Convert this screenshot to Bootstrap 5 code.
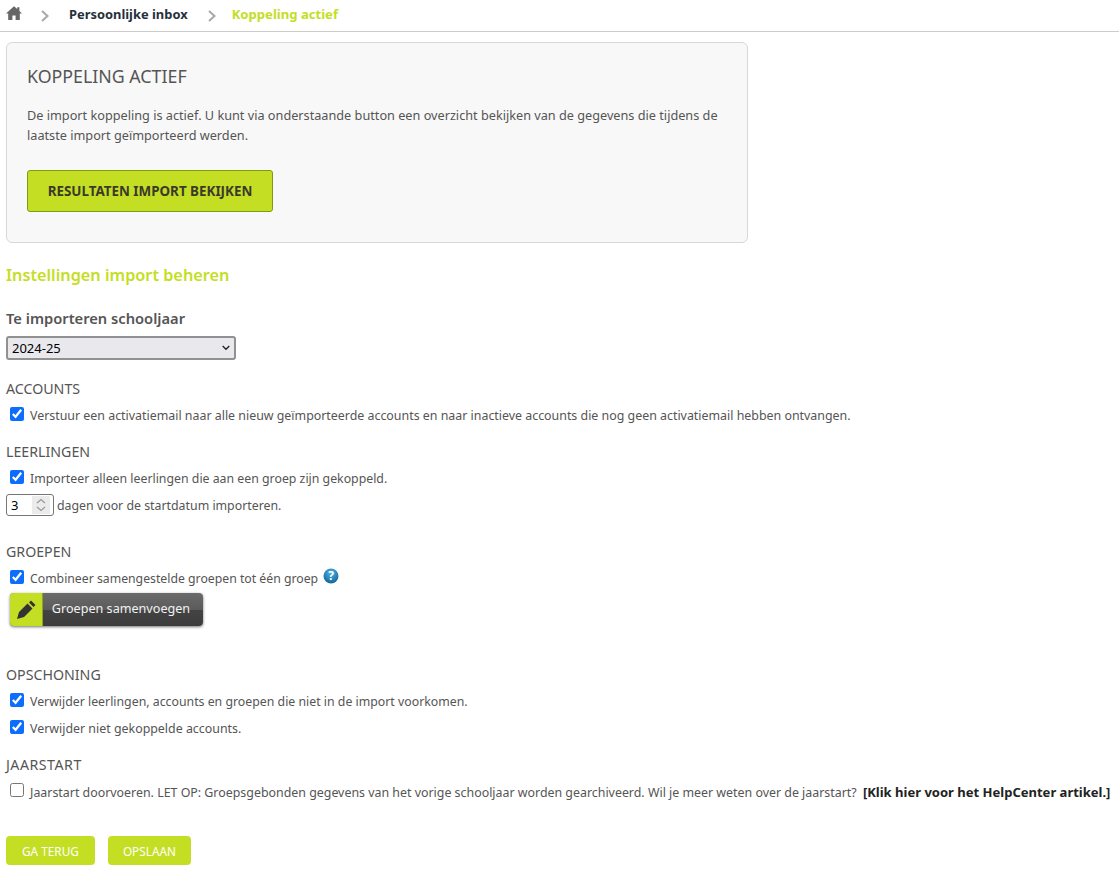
<!DOCTYPE html>
<html lang="nl">
<head>
<meta charset="utf-8">
<title>Koppeling actief</title>
<link rel="stylesheet" href="https://cdn.jsdelivr.net/npm/bootstrap@5.3.0/dist/css/bootstrap.min.css">
<style>
html,body{height:100%}
body{font-family:"Noto Sans","Open Sans",sans-serif;font-size:12.4px;color:#555;background:#fff;line-height:20px;overflow:hidden}
.crumbs{height:32px;border-bottom:1px solid #ccc;padding:0 0 4px 6px;font-weight:700;font-size:12.9px}
.crumbs a{color:#26303a;text-decoration:none}
.crumb-here{color:#c4de24;font-size:13.1px}
.crumb-home{width:16px;height:14px;margin-top:-2px}
.crumb-sep{width:8px;height:12px;margin:4px 20px 0 19px}
.crumb-sep.second{margin:4px 16px 0 20px}
.panel-box{width:742px;height:201px;margin:10px 0 0 6px;background:#f8f8f8;border:1px solid #d8d8d8;border-radius:6px;padding:20px 20px}
.panel-title{font-size:17.8px;line-height:26px;font-weight:400;color:#555;margin:0 0 16px}
.panel-text{margin:0 0 25px;font-size:12.7px}
.btn-result{width:246px;height:42px;background:#c4de24;border:1px solid #7d9c14;border-radius:3px;color:#3a3a2a;font-weight:700;font-size:13.4px;padding:0}
.btn-result:hover{background:#c4de24;color:#3a3a2a}
.form-wrap{padding-left:6px}
.sec-title{font-size:16.25px;line-height:22px;font-weight:600;color:#c4de24;margin:21px 0 0}
.year-label{font-size:14.7px;line-height:20px;font-weight:600;color:#555;margin:22px 0 8px}
.year-select{appearance:none;width:230px;height:24px;font-size:13px;color:#000;background:#e9e9ed url("data:image/svg+xml,%3Csvg xmlns='http://www.w3.org/2000/svg' width='8' height='6'%3E%3Cpath d='M.7 1l3.300 3.300L7.300 1' fill='none' stroke='%23222' stroke-width='1.300'/%3E%3C/svg%3E") no-repeat right 4px center;border:2px solid #919191;border-radius:3px;padding:0 0 0 4px;display:block;font-family:inherit}
.grp{font-size:14.2px;line-height:20px;color:#555;margin:17px 0 6px}
.grp.first{margin-top:19px}
.grp.after-num{margin-top:26px}
.grp.after-merge{margin-top:39px}
.grp.spaced{letter-spacing:.5px}
.line{height:20px;gap:6px;margin:0;padding-top:2px}
.line-next{margin-top:7px}
.line-tight{font-size:12.32px}
.line-tighter{font-size:12.25px}
.chk{margin:-4px 0 0 4px;width:14px;height:14px;flex:none;accent-color:#0d6efd}
.num-row{margin-top:6px;gap:3px;font-size:12.35px}
.num-txt{padding-top:2px}
.num{width:48px;height:22px;font-size:13px;border:1px solid #767676;border-radius:3px;padding:0 3px 0 4px;color:#000;font-family:inherit}
.num::-webkit-inner-spin-button{-webkit-appearance:none;opacity:1;width:18px;height:18px;background:#ebebeb url("data:image/svg+xml,%3Csvg xmlns='http://www.w3.org/2000/svg' width='18' height='18'%3E%3Cpath d='M5 7l4-3.500L13 7M5 11l4 3.500L13 11' fill='none' stroke='%23999' stroke-width='1.200'/%3E%3C/svg%3E") no-repeat center}
.hint{margin:-2px 0 0 -1px;align-self:flex-start;flex:none}
.merge{margin:5px 0 0 4px;width:193px;height:33px;border:0;padding:0;border-radius:4px;overflow:hidden;box-shadow:0 1px 3px rgba(0,0,0,.55);background:linear-gradient(#6b6b6b,#5b5b5b 50%,#444 51%,#3c3c3c);color:#f2f2f2;font-size:12.6px}
.merge-ico{width:33px;height:33px;background:#c4de24;border-right:1px solid #8fa31b}
.merge-txt{flex:1;text-align:center;padding:0 4px 2px 0}
.foot{margin-top:35px;gap:13px}
.foot-btn{height:29px;border:0;border-radius:4px;background:#c4de24;color:#fff;font-size:11.8px;font-weight:400;padding:0 16px}
.foot-btn.narrow{padding:0 15px}
.help-a{color:#222;font-weight:700;text-decoration:none;font-size:13.03px;margin-left:3px}
</style>
</head>
<body>
<nav class="crumbs d-flex align-items-center">
  <svg class="crumb-home" viewBox="0 0 16 14" aria-label="Home"><path fill="#666" d="M8 .2 0 7.4h2.2V14h4.2V9.4h3.2V14h4.2V7.4H16L13.4 5V1.2h-2.2v1.900z"/></svg>
  <svg class="crumb-sep" viewBox="0 0 8 12"><path d="M1 1l5.500 5L1 11" fill="none" stroke="#a8a8a8" stroke-width="2"/></svg>
  <a href="#">Persoonlijke inbox</a>
  <svg class="crumb-sep second" viewBox="0 0 8 12"><path d="M1 1l5.500 5L1 11" fill="none" stroke="#a8a8a8" stroke-width="2"/></svg>
  <span class="crumb-here">Koppeling actief</span>
</nav>
<section class="panel-box">
  <h2 class="panel-title">KOPPELING ACTIEF</h2>
  <p class="panel-text">De import koppeling is actief. U kunt via onderstaande button een overzicht bekijken van de gegevens die tijdens de laatste import geïmporteerd werden.</p>
  <button class="btn btn-result" type="button">RESULTATEN IMPORT BEKIJKEN</button>
</section>
<form class="form-wrap">
  <h3 class="sec-title">Instellingen import beheren</h3>
  <div class="year-label">Te importeren schooljaar</div>
  <select class="year-select"><option>2024-25</option></select>

  <div class="grp first">ACCOUNTS</div>
  <label class="line d-flex align-items-center"><input class="chk" type="checkbox" checked>Verstuur een activatiemail naar alle nieuw geïmporteerde accounts en naar inactieve accounts die nog geen activatiemail hebben ontvangen.</label>

  <div class="grp">LEERLINGEN</div>
  <label class="line line-tight d-flex align-items-center"><input class="chk" type="checkbox" checked>Importeer alleen leerlingen die aan een groep zijn gekoppeld.</label>
  <div class="num-row d-flex align-items-center"><input class="num" type="number" value="3"><span class="num-txt">dagen voor de startdatum importeren.</span></div>

  <div class="grp after-num">GROEPEN</div>
  <div class="line line-tighter d-flex align-items-center"><input class="chk" type="checkbox" checked>Combineer samengestelde groepen tot één groep
    <svg class="hint" width="16" height="16" viewBox="0 0 16 16"><defs><radialGradient id="hg" cx="50%" cy="30%" r="75%"><stop offset="0" stop-color="#4fb4e6"/><stop offset="1" stop-color="#0f5f95"/></radialGradient></defs><circle cx="8" cy="8" r="7.500" fill="url(#hg)"/><text x="8" y="12.400" text-anchor="middle" font-size="12" font-weight="700" fill="#fff">?</text></svg></div>
  <button type="button" class="merge d-flex align-items-center"><span class="merge-ico d-flex align-items-center justify-content-center"><svg width="20" height="20" viewBox="0 0 20 20"><path fill="#333" d="M1 19l2-7 8.500-8.500 5 5L8 17zM13 2.500 15 .5l4.500 4.500-2 2z"/></svg></span><span class="merge-txt">Groepen samenvoegen</span></button>

  <div class="grp after-merge">OPSCHONING</div>
  <label class="line line-tight d-flex align-items-center"><input class="chk" type="checkbox" checked>Verwijder leerlingen, accounts en groepen die niet in de import voorkomen.</label>
  <label class="line line-next d-flex align-items-center"><input class="chk" type="checkbox" checked>Verwijder niet gekoppelde accounts.</label>

  <div class="grp spaced">JAARSTART</div>
  <div class="line d-flex align-items-center text-nowrap"><input class="chk" type="checkbox"><span>Jaarstart doorvoeren. LET OP: Groepsgebonden gegevens van het vorige schooljaar worden gearchiveerd. Wil je meer weten over de jaarstart? <a class="help-a" href="#">[Klik hier voor het HelpCenter artikel.]</a></span></div>

  <div class="foot d-flex">
    <button type="button" class="foot-btn">GA TERUG</button>
    <button type="button" class="foot-btn narrow">OPSLAAN</button>
  </div>
</form>
<script src="https://cdn.jsdelivr.net/npm/bootstrap@5.3.0/dist/js/bootstrap.bundle.min.js"></script>
</body>
</html>
